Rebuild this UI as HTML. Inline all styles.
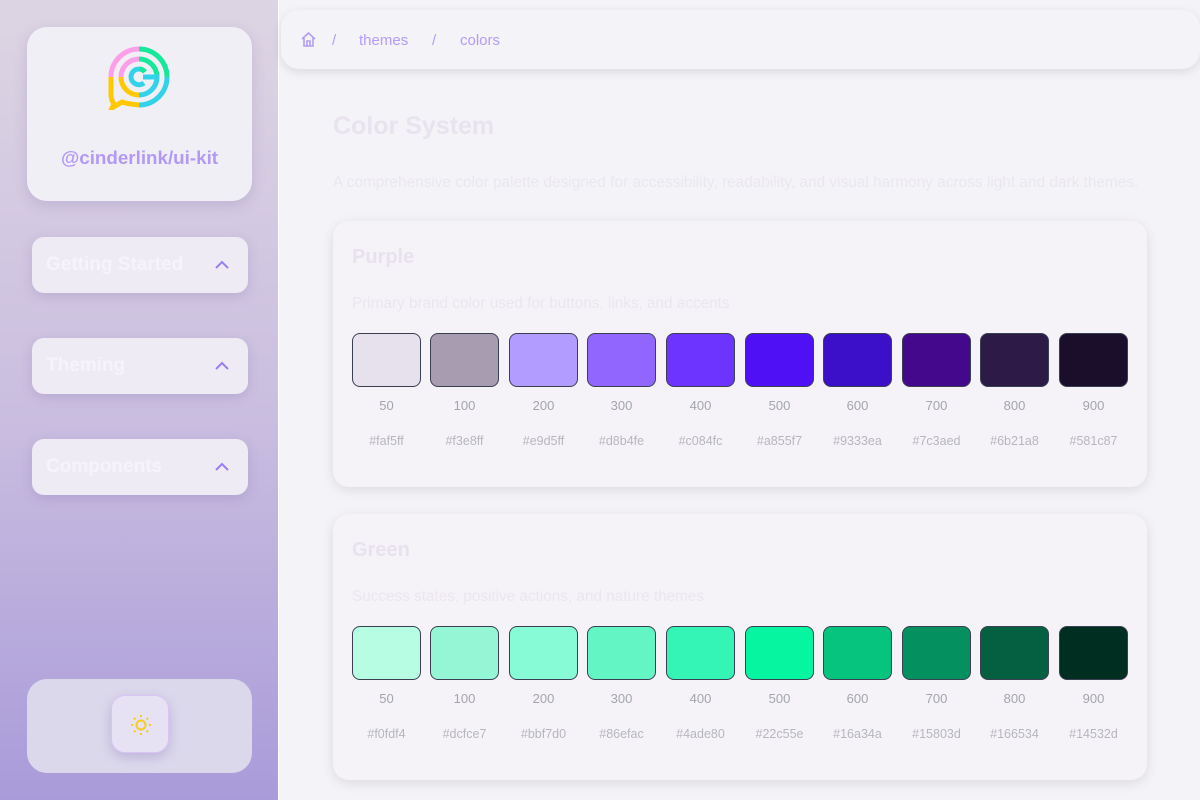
<!DOCTYPE html>
<html><head><meta charset="utf-8"><style>
*{box-sizing:border-box;margin:0;padding:0}
body{width:1200px;height:800px;overflow:hidden;font-family:"Liberation Sans",sans-serif;background:#f4f3f7;position:relative}
.side{position:absolute;left:0;top:0;width:279px;height:800px;background:linear-gradient(180deg,#ddd5e3 0%,#cbbfe0 50%,#a99bd9 100%);border-right:1px solid #fff}
.logo{position:absolute;left:27px;top:27px;width:225px;height:174px;background:#f1eff6;border-radius:20px;box-shadow:0 4px 14px rgba(100,80,150,.18)}
.logo .t{position:absolute;top:120px;width:100%;text-align:center;color:#b399f5;font-weight:bold;font-size:18.8px}
.nav{position:absolute;left:32px;width:216px;height:56px;background:#eeebf4;border-radius:12px;box-shadow:0 4px 12px rgba(100,80,150,.18);color:#f6f4fa;font-weight:bold;font-size:19px;padding:17px 14px}
.nav svg{position:absolute;right:18px;top:23px}
.bot{position:absolute;left:27px;top:679px;width:225px;height:94px;background:#dcd8ec;border-radius:20px}
.sun{position:absolute;left:84px;top:16px;width:58px;height:58px;border-radius:14px;background:#e6e2f3;border:1px solid #d8c4f6;box-shadow:0 4px 12px rgba(90,70,150,.25)}
.crumb{position:absolute;left:281px;top:10px;width:919px;height:59px;background:#f4f3f8;border-radius:18px;box-shadow:0 3px 10px rgba(0,0,0,.1);color:#b49cf8;font-size:15px}
.crumb span{position:absolute;top:22px}
h1{position:absolute;left:333px;top:112px;font-size:25px;color:#e8e3ee;font-weight:bold}
.sub{position:absolute;left:333px;top:174px;font-size:15.4px;color:#ebe7ef}
.card{position:absolute;left:333px;width:814px;background:#f5f3f8;border-radius:16px;box-shadow:0 3px 12px rgba(0,0,0,.1)}
.card h2{position:absolute;left:19px;top:25px;font-size:20px;color:#e8e2ee}
.card .d{position:absolute;left:19px;top:74px;font-size:15.3px;color:#ebe6ef}
.sw{position:absolute;top:112px;width:69px;height:54px;border:1px solid #3a3f52;border-radius:8px}
.n{position:absolute;top:177px;width:69px;text-align:center;font-size:13px;color:#a3a5ad}
.h{position:absolute;top:213px;width:69px;text-align:center;font-size:12.5px;color:#b6b7be}
</style></head><body>
<div class="side">
 <div class="logo">
  <svg style="position:absolute;left:81px;top:19px" width="62" height="64" viewBox="0 0 62 64">
   <g fill="none" stroke-width="5">
    <path d="M31 3 A28 28 0 0 0 3 31" stroke="#ff9ee8"/>
    <path d="M31 3 A28 28 0 0 1 59 31" stroke="#14e89a"/>
    <path d="M59 31 A28 28 0 0 1 31 59" stroke="#32d2ea"/>
    <path d="M3 31 V48 Q3 54 6 58 L4 62 L14 56 Q20 58 31 59" stroke="#ffc800"/>
    <path d="M31 13 A18 18 0 0 0 13 31" stroke="#ff9ee8"/>
    <path d="M31 13 A18 18 0 0 1 49 31" stroke="#14e89a"/>
    <path d="M13 31 A18 18 0 0 0 31 49" stroke="#ffc800"/>
    <path d="M31 49 A18 18 0 0 0 49 31 L35 31" stroke="#32d2ea"/>
    <path d="M31 23 A8 8 0 0 0 23 31" stroke="#32d2ea"/>
    <path d="M23 31 A8 8 0 0 0 36 37" stroke="#32d2ea"/>
    <path d="M31 23 A8 8 0 0 1 37 26" stroke="#14e89a"/>
   </g></svg>
  <div class="t">@cinderlink/ui-kit</div>
 </div>
 <div class="nav" style="top:237px">Getting Started<svg width="16" height="10"><path d="M2 8 L8 2 L14 8" fill="none" stroke="#9a7cf5" stroke-width="2"/></svg></div>
 <div class="nav" style="top:338px">Theming<svg width="16" height="10"><path d="M2 8 L8 2 L14 8" fill="none" stroke="#9a7cf5" stroke-width="2"/></svg></div>
 <div class="nav" style="top:439px">Components<svg width="16" height="10"><path d="M2 8 L8 2 L14 8" fill="none" stroke="#9a7cf5" stroke-width="2"/></svg></div>
 <div class="bot"><div class="sun"><svg style="position:absolute;left:18px;top:18px" width="22" height="22" viewBox="0 0 22 22"><circle cx="11" cy="11" r="4.5" fill="none" stroke="#f7cc22" stroke-width="2"/><g stroke="#f7cc22" stroke-width="2"><path d="M11 1v2M11 19v2M1 11h2M19 11h2M4 4l1.4 1.4M16.6 16.6L18 18M4 18l1.4-1.4M16.6 5.4L18 4"/></g></svg></div></div>
</div>
<div class="crumb">
 <svg style="position:absolute;left:19px;top:21px" width="17" height="17" viewBox="0 0 17 17"><path d="M2 8 L8.5 2 L15 8 M4 7 V15 H13 V7 M7 15 V10 H10 V15" fill="none" stroke="#b49cf8" stroke-width="1.6"/></svg>
 <span style="left:51px">/</span><span style="left:78px">themes</span><span style="left:151px">/</span><span style="left:179px">colors</span>
</div>
<h1>Color System</h1>
<div class="sub">A comprehensive color palette designed for accessibility, readability, and visual harmony across light and dark themes.</div>
<div class="card" style="top:221px;height:266px"><h2>Purple</h2><div class="d">Primary brand color used for buttons, links, and accents</div>
<div class="sw" style="left:19px;background:#e6e1ec"></div><div class="n" style="left:19px">50</div><div class="h" style="left:19px">#faf5ff</div>
<div class="sw" style="left:97px;background:#a89cb0"></div><div class="n" style="left:97px">100</div><div class="h" style="left:97px">#f3e8ff</div>
<div class="sw" style="left:176px;background:#b39cff"></div><div class="n" style="left:176px">200</div><div class="h" style="left:176px">#e9d5ff</div>
<div class="sw" style="left:254px;background:#9166ff"></div><div class="n" style="left:254px">300</div><div class="h" style="left:254px">#d8b4fe</div>
<div class="sw" style="left:333px;background:#6d33ff"></div><div class="n" style="left:333px">400</div><div class="h" style="left:333px">#c084fc</div>
<div class="sw" style="left:412px;background:#5010f5"></div><div class="n" style="left:412px">500</div><div class="h" style="left:412px">#a855f7</div>
<div class="sw" style="left:490px;background:#3c10c8"></div><div class="n" style="left:490px">600</div><div class="h" style="left:490px">#9333ea</div>
<div class="sw" style="left:569px;background:#44088c"></div><div class="n" style="left:569px">700</div><div class="h" style="left:569px">#7c3aed</div>
<div class="sw" style="left:647px;background:#2e1a47"></div><div class="n" style="left:647px">800</div><div class="h" style="left:647px">#6b21a8</div>
<div class="sw" style="left:726px;background:#1a0e2a"></div><div class="n" style="left:726px">900</div><div class="h" style="left:726px">#581c87</div>
</div>
<div class="card" style="top:514px;height:266px"><h2>Green</h2><div class="d">Success states, positive actions, and nature themes</div>
<div class="sw" style="left:19px;background:#b6fde3"></div><div class="n" style="left:19px">50</div><div class="h" style="left:19px">#f0fdf4</div>
<div class="sw" style="left:97px;background:#95f6d6"></div><div class="n" style="left:97px">100</div><div class="h" style="left:97px">#dcfce7</div>
<div class="sw" style="left:176px;background:#86fbd6"></div><div class="n" style="left:176px">200</div><div class="h" style="left:176px">#bbf7d0</div>
<div class="sw" style="left:254px;background:#64f5c5"></div><div class="n" style="left:254px">300</div><div class="h" style="left:254px">#86efac</div>
<div class="sw" style="left:333px;background:#34f5b5"></div><div class="n" style="left:333px">400</div><div class="h" style="left:333px">#4ade80</div>
<div class="sw" style="left:412px;background:#06f5a0"></div><div class="n" style="left:412px">500</div><div class="h" style="left:412px">#22c55e</div>
<div class="sw" style="left:490px;background:#06c47d"></div><div class="n" style="left:490px">600</div><div class="h" style="left:490px">#16a34a</div>
<div class="sw" style="left:569px;background:#04905f"></div><div class="n" style="left:569px">700</div><div class="h" style="left:569px">#15803d</div>
<div class="sw" style="left:647px;background:#046040"></div><div class="n" style="left:647px">800</div><div class="h" style="left:647px">#166534</div>
<div class="sw" style="left:726px;background:#002e20"></div><div class="n" style="left:726px">900</div><div class="h" style="left:726px">#14532d</div>
</div>
</body></html>
